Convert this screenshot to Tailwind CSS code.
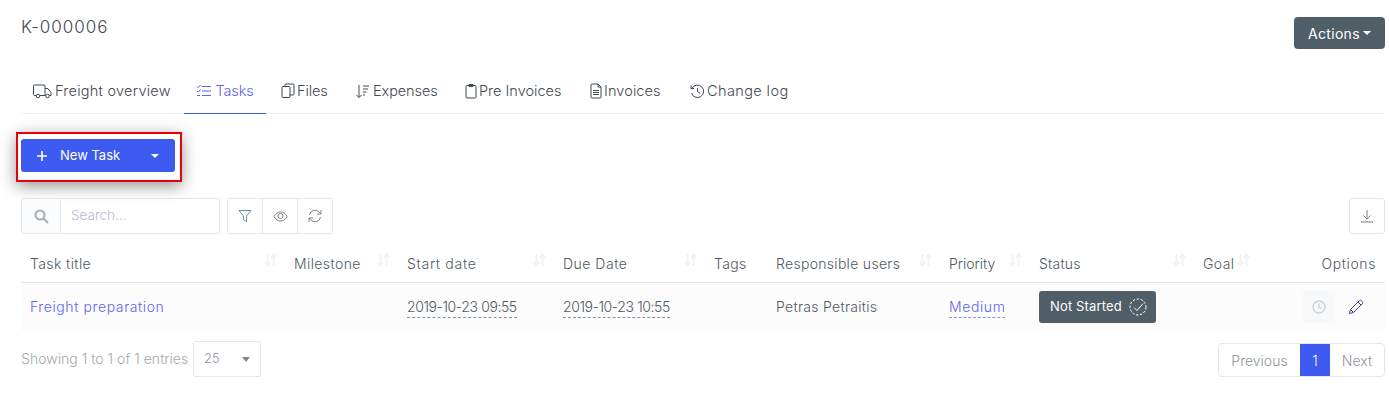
<!DOCTYPE html>
<html lang="en">
<head>
    <meta charset="UTF-8">
    <meta name="viewport" content="width=device-width, initial-scale=1.0">
    <title>K-000006</title>
    <script src="https://cdn.jsdelivr.net/npm/@tailwindcss/browser@4"></script>
</head>
<body class="bg-white h-[411px] overflow-hidden font-['Inter',sans-serif] font-light text-[14px] text-[#4e5a63]">
    <div class="pl-[21px] pr-[4px]">
        <!-- Header -->
        <div class="flex justify-between h-[69px]">
            <h1 class="pt-[15px] text-[17px] leading-[24px] text-[#3f4a52] tracking-[1px] font-light">K-000006</h1>
            <button class="mt-[17px] w-[91px] h-[32px] rounded-[4px] bg-[#505e68] text-white text-[14px] font-normal tracking-[0.3px] flex items-center justify-center gap-[3px]">
                Actions
                <span class="w-0 h-0 border-x-[4px] border-x-transparent border-t-[4px] border-t-white"></span>
            </button>
        </div>

        <!-- Tabs -->
        <div class="flex h-[45px] border-b border-[#eceef0] text-[14.5px] text-[#3f4a52]">
            <a class="w-[163px] pl-[12px] flex items-center gap-[3px] tracking-[0.25px]">
                <svg class="w-[19px] h-[16px]" viewBox="0 0 19 16" fill="none" stroke="currentColor" stroke-width="1"><path d="M3 12.5H1.500a1 1 0 0 1-1-1V3a1 1 0 0 1 1-1h9.500a1 1 0 0 1 1 1v9.500H7"/><path d="M12 5.500h3l3 4v3h-2"/><path d="M12 12.500h1"/><circle cx="5" cy="13" r="1.800"/><circle cx="14.500" cy="13" r="1.800"/></svg>
                Freight overview
            </a>
            <a class="w-[82px] flex items-center justify-center gap-[3px] text-[#5f63f2] border-b border-[#3d5af1] h-[45px] tracking-[-0.1px]">
                <svg class="w-[16px] h-[14px]" viewBox="0 0 16 14" fill="none" stroke="currentColor" stroke-width="1"><path d="M1 2.500l1.200 1.200L4.500 1M1 7l1.200 1.200L4.500 5.500M1 11.500h3M6 2.500h9M6 7h9M6 11.500h9"/></svg>
                Tasks
            </a>
            <a class="w-[76px] pl-[15px] flex items-center gap-[2px] tracking-[-0.1px]">
                <svg class="w-[14px] h-[16px]" viewBox="0 0 14 16" fill="none" stroke="currentColor" stroke-width="1"><rect x="1" y="3.500" width="8" height="11" rx="1"/><path d="M4 3.500V2a1 1 0 0 1 1-1h7a1 1 0 0 1 1 1v9a1 1 0 0 1-1 1H9"/></svg>
                Files
            </a>
            <a class="w-[109px] pl-[13px] flex items-center gap-[3px] tracking-[-0.1px]">
                <svg class="w-[15px] h-[15px]" viewBox="0 0 15 15" fill="none" stroke="currentColor" stroke-width="1"><path d="M4 1v12.500M1.500 11L4 13.500 6.500 11M8 2h6M8 5h5M8 8h3.500M8 11h2"/></svg>
                Expenses
            </a>
            <a class="w-[124px] pl-[14px] flex items-center gap-[2px]">
                <svg class="w-[12px] h-[16px]" viewBox="0 0 12 16" fill="none" stroke="currentColor" stroke-width="1"><rect x="1" y="2.500" width="10" height="12.500" rx="1"/><path d="M4 3.500V1.500h4v2z" fill="currentColor"/></svg>
                Pre Invoices
            </a>
            <a class="w-[100px] pl-[15px] flex items-center gap-[2px] tracking-[0.1px]">
                <svg class="w-[12px] h-[16px]" viewBox="0 0 12 16" fill="none" stroke="currentColor" stroke-width="1"><path d="M1 2a1 1 0 0 1 1-1h6l3 3v10a1 1 0 0 1-1 1H2a1 1 0 0 1-1-1z"/><path d="M8 1v3h3M3 7.500h6M3 9.500h6M3 11.500h6"/></svg>
                Invoices
            </a>
            <a class="pl-[15px] flex items-center gap-[2px] tracking-[0.4px]">
                <svg class="w-[15px] h-[15px]" viewBox="0 0 15 15" fill="none" stroke="currentColor" stroke-width="1"><path d="M2.200 4A6.200 6.200 0 1 1 1.500 9"/><path d="M1 1.500V4.500H4M7.500 4v3.800l2.500 1.400"/></svg>
                Change log
            </a>
        </div>

        <!-- New task button with red highlight -->
        <div class="pt-[18px] h-[84px]">
            <div class="w-[166px] h-[50px] -ml-[5px] border-[2px] border-[#e8000b] pl-[3px] pt-[5px] shadow-[0_4px_16px_rgba(0,0,0,0.42)]">
                <button class="w-[154px] h-[33px] rounded-[3px] bg-[#3d5af1] text-white text-[13px] font-normal flex items-center pl-[15px] pr-[16px]">
                    <svg class="w-[12px] h-[12px] mr-[12px]" viewBox="0 0 12 12" stroke="currentColor" stroke-width="1.600"><path d="M6 1v10M1 6h10"/></svg>
                    New Task
                    <span class="ml-auto w-0 h-0 border-x-[4px] border-x-transparent border-t-[4px] border-t-white"></span>
                </button>
            </div>
        </div>

        <!-- Toolbar -->
        <div class="flex h-[36px] text-[13.5px]">
            <div class="w-[40px] bg-[#fbfcfd] border border-[#e4e7ea] rounded-l-[3px] flex items-center justify-center">
                <svg class="w-[15px] h-[15px] text-[#a9adb0]" viewBox="0 0 15 15" fill="none" stroke="currentColor" stroke-width="2"><circle cx="6" cy="6" r="4.500"/><path d="M9.500 9.500l4.500 4.500"/></svg>
            </div>
            <div class="w-[159px] border border-l-0 border-[#e4e7ea] rounded-r-[3px] flex items-center pl-[10px] pb-[2px] text-[#b0bccd]">Search...</div>
            <div class="ml-[7px] flex border border-[#e4e7ea] rounded-[3px] h-[36px] w-[106px]">
                <div class="w-[35px] flex items-center justify-center border-r border-[#e4e7ea]">
                    <svg class="w-[14px] h-[14px] text-[#6e8fb5]" viewBox="0 0 14 14" fill="none" stroke="currentColor" stroke-width="1"><path d="M1 1.500h12L8.500 7v5.500l-3-1.500V7z"/></svg>
                </div>
                <div class="w-[35px] flex items-center justify-center border-r border-[#e4e7ea]">
                    <svg class="w-[15px] h-[11px] text-[#7b8185]" viewBox="0 0 15 11" fill="none" stroke="currentColor" stroke-width="1"><path d="M.8 5.500C3 2 5 1 7.500 1s4.500 1 6.700 4.500C12 9 10 10 7.500 10S3 9 .8 5.500z"/><circle cx="7.500" cy="5" r="2.500"/></svg>
                </div>
                <div class="w-[34px] flex items-center justify-center">
                    <svg class="w-[14px] h-[14px] text-[#7b8185]" viewBox="0 0 14 14" fill="none" stroke="currentColor" stroke-width="1"><path d="M1.500 6A5.500 5.500 0 0 1 11.500 3.500L13 5M13 1v4H9M12.500 8A5.500 5.500 0 0 1 2.500 10.500L1 9M1 13V9h4"/></svg>
                </div>
            </div>
            <div class="ml-auto w-[36px] border border-[#e4e7ea] rounded-[3px] flex items-center justify-center">
                <svg class="w-[14px] h-[14px] text-[#7b8185]" viewBox="0 0 14 14" fill="none" stroke="currentColor" stroke-width="1"><path d="M7 1v9M3.500 6.500L7 10l3.500-3.500M1 13h12"/></svg>
            </div>
        </div>

        <!-- Table -->
        <table class="mt-[10px] w-[1364px] table-fixed border-collapse text-[14px]">
            <colgroup>
                <col class="w-[264px]"><col class="w-[113px]"><col class="w-[156px]"><col class="w-[151px]"><col class="w-[62px]"><col class="w-[173px]"><col class="w-[90px]"><col class="w-[164px]"><col class="w-[100px]"><col class="w-[91px]">
            </colgroup>
            <thead>
                <tr class="h-[38px] border-b border-[#e4e7ea] text-left text-[#4e5a63]">
                    <th class="px-[9px] pt-[2px] font-light relative tracking-[0.4px]">Task title<svg class="absolute right-[8px] top-[9px] w-[13px] h-[14px] text-[#f1f3f4]" viewBox="0 0 13 14" fill="none" stroke="currentColor" stroke-width="2"><path d="M3.500 1v11M1 9.500l2.500 3 2.500-3M9.500 13V2M7 4.500l2.500-3 2.500 3"/></svg></th>
                    <th class="px-[9px] pt-[2px] font-light relative tracking-[0.4px]">Milestone<svg class="absolute right-[8px] top-[9px] w-[13px] h-[14px] text-[#f1f3f4]" viewBox="0 0 13 14" fill="none" stroke="currentColor" stroke-width="2"><path d="M3.500 1v11M1 9.500l2.500 3 2.500-3M9.500 13V2M7 4.500l2.500-3 2.500 3"/></svg></th>
                    <th class="px-[9px] pt-[2px] font-light relative tracking-[0.7px]">Start date<svg class="absolute right-[8px] top-[9px] w-[13px] h-[14px] text-[#f1f3f4]" viewBox="0 0 13 14" fill="none" stroke="currentColor" stroke-width="2"><path d="M3.500 1v11M1 9.500l2.500 3 2.500-3M9.500 13V2M7 4.500l2.500-3 2.500 3"/></svg></th>
                    <th class="px-[9px] pt-[2px] font-light relative tracking-[0.5px]">Due Date<svg class="absolute right-[8px] top-[9px] w-[13px] h-[14px] text-[#f1f3f4]" viewBox="0 0 13 14" fill="none" stroke="currentColor" stroke-width="2"><path d="M3.500 1v11M1 9.500l2.500 3 2.500-3M9.500 13V2M7 4.500l2.500-3 2.500 3"/></svg></th>
                    <th class="px-[9px] pt-[2px] font-light tracking-[0.3px]">Tags</th>
                    <th class="px-[9px] pt-[2px] font-light relative tracking-[0.3px]">Responsible users<svg class="absolute right-[8px] top-[9px] w-[13px] h-[14px] text-[#f1f3f4]" viewBox="0 0 13 14" fill="none" stroke="currentColor" stroke-width="2"><path d="M3.500 1v11M1 9.500l2.500 3 2.500-3M9.500 13V2M7 4.500l2.500-3 2.500 3"/></svg></th>
                    <th class="px-[9px] pt-[2px] font-light relative">Priority<svg class="absolute right-[8px] top-[9px] w-[13px] h-[14px] text-[#f1f3f4]" viewBox="0 0 13 14" fill="none" stroke="currentColor" stroke-width="2"><path d="M3.500 1v11M1 9.500l2.500 3 2.500-3M9.500 13V2M7 4.500l2.500-3 2.500 3"/></svg></th>
                    <th class="px-[9px] pt-[2px] font-light relative tracking-[0.2px]">Status<svg class="absolute right-[8px] top-[9px] w-[13px] h-[14px] text-[#f1f3f4]" viewBox="0 0 13 14" fill="none" stroke="currentColor" stroke-width="2"><path d="M3.500 1v11M1 9.500l2.500 3 2.500-3M9.500 13V2M7 4.500l2.500-3 2.500 3"/></svg></th>
                    <th class="px-[9px] pt-[2px] font-light relative tracking-[0.4px]">Goal<svg class="absolute right-[44px] top-[9px] w-[13px] h-[14px] text-[#f1f3f4]" viewBox="0 0 13 14" fill="none" stroke="currentColor" stroke-width="2"><path d="M3.500 1v11M1 9.500l2.500 3 2.500-3M9.500 13V2M7 4.500l2.500-3 2.500 3"/></svg></th>
                    <th class="px-[9px] pt-[2px] font-light text-right tracking-[0.6px]">Options</th>
                </tr>
            </thead>
            <tbody>
                <tr class="h-[49px] bg-[#fcfcfd]">
                    <td class="px-[9px] text-[#5f63f2] tracking-[0.6px]">Freight preparation</td>
                    <td class="px-[9px]"></td>
                    <td class="px-[9px]"><span class="border-b border-dashed border-[#8a939a] pb-[2px] tracking-[-0.4px]">2019-10-23 09:55</span></td>
                    <td class="px-[9px]"><span class="border-b border-dashed border-[#8a939a] pb-[2px] tracking-[-0.4px]">2019-10-23 10:55</span></td>
                    <td class="px-[9px]"></td>
                    <td class="px-[9px] tracking-[0.3px]">Petras Petraitis</td>
                    <td class="px-[9px]"><span class="text-[#5f63f2] border-b border-dashed border-[#8e90f5] pb-[2px] tracking-[0.6px]">Medium</span></td>
                    <td class="px-[9px]">
                        <span class="inline-flex items-center w-[117px] h-[32px] pl-[11px] rounded-[3px] bg-[#505e68] text-white text-[13px] font-normal tracking-[0.15px] gap-[7px]">
                            Not Started
                            <svg class="w-[18px] h-[18px]" viewBox="0 0 18 18" fill="none" stroke="currentColor" stroke-width="1"><circle cx="9" cy="9" r="8" stroke-dasharray="2.500 1.500"/><path d="M5 9.500l3 3 6-7"/></svg>
                        </span>
                    </td>
                    <td class="px-[9px]"></td>
                    <td class="pr-[9px]">
                        <div class="flex justify-end items-center">
                            <span class="w-[32px] h-[32px] bg-[#f7f8f9] flex items-center justify-center">
                                <svg class="w-[14px] h-[14px] text-[#c9d0d4]" viewBox="0 0 14 14" fill="none" stroke="currentColor" stroke-width="1.300"><circle cx="7" cy="7" r="6"/><path d="M7 3.500V7.500l2.500 1"/></svg>
                            </span>
                            <span class="w-[41px] flex items-center justify-center">
                                <svg class="w-[16px] h-[16px] text-[#4a3f8f]" viewBox="0 0 16 16" fill="none" stroke="currentColor" stroke-width="1"><path d="M1.500 14.500l1-4L11.500 1.500a1.200 1.200 0 0 1 1.700 0l1.300 1.300a1.200 1.200 0 0 1 0 1.700L5.500 13.500zM2.500 10.500l3 3M10 3l3 3"/></svg>
                            </span>
                        </div>
                    </td>
                </tr>
            </tbody>
        </table>

        <!-- Footer -->
        <div class="flex items-start mt-[10px] text-[14px]">
            <span class="w-[172px] mt-[9px] text-[#a3a8ac] leading-[18px] tracking-[0.03px] whitespace-nowrap">Showing 1 to 1 of 1 entries</span>
            <div class="w-[68px] h-[36px] border border-[#e4e7ea] rounded-[2px] flex items-center pl-[10px] text-[13px] text-[#8b9196]">
                25
                <span class="ml-[22px] w-0 h-0 border-x-[4px] border-x-transparent border-t-[5px] border-t-[#7d868c]"></span>
            </div>
            <div class="ml-auto mt-[2px] flex h-[34px] border border-[#e4e7ea] rounded-[4px] text-[#8f979c] overflow-hidden">
                <span class="w-[81px] flex items-center justify-center">Previous</span>
                <span class="w-[30px] flex items-center justify-center bg-[#3d5af1] text-white">1</span>
                <span class="w-[54px] flex items-center justify-center">Next</span>
            </div>
        </div>
    </div>
</body>
</html>
